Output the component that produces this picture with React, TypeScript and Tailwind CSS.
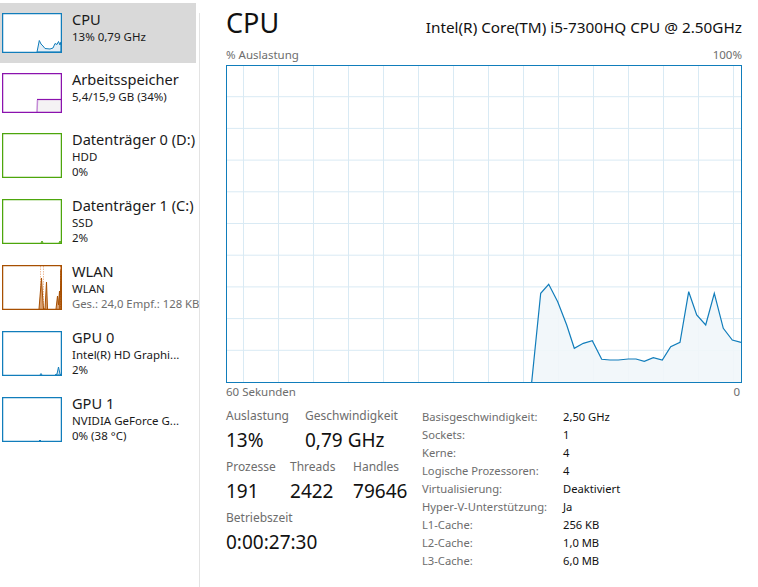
import React from "react";

type Item = {
  title: string;
  lines: string[];
  color: string;
  thumb: React.ReactNode;
  tall?: boolean;
  selected?: boolean;
};

function Thumb({ w = 60, h, color, children }: { w?: number; h: number; color: string; children?: React.ReactNode }) {
  return (
    <svg width={w} height={h} className="block shrink-0">
      <rect x={0} y={0} width={w} height={h} fill="#ffffff" />
      {children}
      <rect x={0.5} y={0.5} width={w - 1} height={h - 1} fill="none" stroke={color} strokeWidth={1.5} />
    </svg>
  );
}

const cpuThumb = (
  <Thumb h={40} color="#117dbb">
    <polygon
      points="35,39 37.3,27.5 39,31 41,33 43,35.5 48,36 51,35 53,30.5 55,31.5 56.5,28.5 58,32 59,29 59,39"
      fill="#e3eef6"
      stroke="#117dbb"
      strokeWidth={1}
    />
  </Thumb>
);

const memThumb = (
  <Thumb h={40} color="#8b12ae">
    <rect x={35} y={26} width={24.5} height={13.5} fill="#f4f2f4" />
    <line x1={35} y1={26.5} x2={60} y2={26.5} stroke="#8b12ae" strokeWidth={1.2} />
    <line x1={35.5} y1={27} x2={35} y2={39} stroke="#c48bd6" strokeWidth={1.5} />
  </Thumb>
);

const disk0Thumb = <Thumb h={45} color="#4da60c" />;

const disk1Thumb = (
  <Thumb h={45} color="#4da60c">
    <polyline points="39,44 40,42 41,44" fill="none" stroke="#4da60c" strokeWidth={1} />
    <polyline points="57,44 58,42 59,44" fill="none" stroke="#4da60c" strokeWidth={1} />
  </Thumb>
);

const wlanThumb = (
  <Thumb h={45} color="#a74f01">
    <line x1={38.5} y1={1} x2={38.5} y2={44} stroke="#eebb99" strokeWidth={1} strokeDasharray="1.5 1" />
    <line x1={41.5} y1={1} x2={41.5} y2={44} stroke="#eebb99" strokeWidth={1} strokeDasharray="1.5 1" />
    <line x1={58.5} y1={1} x2={58.5} y2={44} stroke="#e08a55" strokeWidth={1} strokeDasharray="1.5 1" />
    <polyline points="37,44 39.5,13 40.5,30 41.5,44 43,44 44.5,17 45.5,44" fill="#d9a070" stroke="#a74f01" strokeWidth={1} />
    <polyline points="54,44 55.5,31 56.5,40 57.5,26 58,44" fill="#d9a070" stroke="#a74f01" strokeWidth={1} />
    <polyline points="58,44 59,5 59.5,44" fill="none" stroke="#a74f01" strokeWidth={1} />
  </Thumb>
);

const gpu0Thumb = (
  <Thumb h={45} color="#117dbb">
    <polyline points="38,44 39,42.5 40,44" fill="none" stroke="#117dbb" strokeWidth={1} />
    <polygon points="53,44 55,43 56.5,36 58,43 59,44" fill="#cfe2ef" stroke="#117dbb" strokeWidth={1} />
  </Thumb>
);

const gpu1Thumb = (
  <Thumb h={45} color="#117dbb">
    <polyline points="37,44 38,43 39,44" fill="none" stroke="#117dbb" strokeWidth={1} />
  </Thumb>
);

const items: Item[] = [
  { title: "CPU", lines: ["13% 0,79 GHz"], color: "#117dbb", thumb: cpuThumb, selected: true },
  { title: "Arbeitsspeicher", lines: ["5,4/15,9 GB (34%)"], color: "#8b12ae", thumb: memThumb },
  { title: "Datenträger 0 (D:)", lines: ["HDD", "0%"], color: "#4da60c", thumb: disk0Thumb, tall: true },
  { title: "Datenträger 1 (C:)", lines: ["SSD", "2%"], color: "#4da60c", thumb: disk1Thumb, tall: true },
  { title: "WLAN", lines: ["WLAN", "Ges.: 24,0 Empf.: 128 KB"], color: "#a74f01", thumb: wlanThumb, tall: true },
  { title: "GPU 0", lines: ["Intel(R) HD Graphi...", "2%"], color: "#117dbb", thumb: gpu0Thumb, tall: true },
  { title: "GPU 1", lines: ["NVIDIA GeForce G...", "0% (38 °C)"], color: "#117dbb", thumb: gpu1Thumb, tall: true },
];

function SidebarItem({ item }: { item: Item }) {
  return (
    <div
      className={`flex pl-[2px] pt-[10px] ${item.tall ? "h-[66px]" : "h-[60px]"} ${
        item.selected ? "bg-[#d9d9d9] w-[196px]" : ""
      }`}
    >
      {item.thumb}
      <div className="ml-[10px] -mt-[3px] flex flex-col whitespace-nowrap">
        <div className="text-[14.6px] leading-[19px] text-[#1a1a1a]">{item.title}</div>
        {item.lines.map((l, i) =>
          i === 1 && item.title === "WLAN" ? (
            <div key={i} className="text-[11.3px] leading-[15px] text-[#6d6d6d]">
              {l}
            </div>
          ) : (
            <div key={i} className="text-[11.5px] leading-[15px] text-[#1a1a1a]">
              {l}
            </div>
          )
        )}
      </div>
    </div>
  );
}

const linePts: [number, number][] = [
  [304.7, 316], [313.7, 227.3], [321.7, 218.3], [330.7, 235.7], [339.7, 259], [347.3, 282.3],
  [356.3, 277.3], [365.3, 274.7], [374.7, 293.3], [383, 294], [391.3, 294], [401.3, 293],
  [409, 293], [417.3, 295.3], [426.3, 291.7], [435.3, 294], [443.7, 280.7], [453, 276.3],
  [461.7, 225.7], [469.7, 249], [478.7, 259], [487.3, 227.3], [496.3, 262.3], [505.3, 274],
  [514, 276.3],
];

function CpuGraph() {
  const vx = Array.from({ length: 15 }, (_, i) => 16.5 + i * 35);
  const hy = Array.from({ length: 9 }, (_, i) => 30.7 + i * 31.7);
  const pts = linePts.map((p) => p.join(",")).join(" ");
  return (
    <div className="border border-[#117dbb] w-[516px] h-[318px]">
      <svg width={514} height={316} className="block">
        {vx.map((x) => (
          <line key={x} x1={x} y1={0} x2={x} y2={316} stroke="#d9eaf4" strokeWidth={1} />
        ))}
        {hy.map((y) => (
          <line key={y} x1={0} y1={y} x2={514} y2={y} stroke="#d9eaf4" strokeWidth={1} />
        ))}
        <polygon points={`${pts} 514,316`} fill="#f1f6fa" fillOpacity={0.9} />
        <polyline points={pts} fill="none" stroke="#117dbb" strokeWidth={1.2} />
      </svg>
    </div>
  );
}

const specs: [string, string][] = [
  ["Basisgeschwindigkeit:", "2,50 GHz"],
  ["Sockets:", "1"],
  ["Kerne:", "4"],
  ["Logische Prozessoren:", "4"],
  ["Virtualisierung:", "Deaktiviert"],
  ["Hyper-V-Unterstützung:", "Ja"],
  ["L1-Cache:", "256 KB"],
  ["L2-Cache:", "1,0 MB"],
  ["L3-Cache:", "6,0 MB"],
];

function Stat({ label, value, w }: { label: string; value: string; w: string }) {
  return (
    <div className={w}>
      <div className="text-[12px] leading-[16px] text-[#6d6d6d]">{label}</div>
      <div className="text-[19px] leading-[24px] text-[#111] mt-[4px]">{value}</div>
    </div>
  );
}

export default function App() {
  return (
    <div className="w-[758px] h-[587px] bg-white flex overflow-hidden font-['Noto_Sans',sans-serif]">
      <div className="w-[199px] pt-[3px] flex flex-col">
        {items.map((it) => (
          <SidebarItem key={it.title} item={it} />
        ))}
      </div>
      <div className="w-px bg-[#e3e3e3] mt-[13px]" />
      <div className="flex-1 pl-[26px] pr-[16px] flex flex-col">
        <div className="flex justify-between items-baseline pt-[6px] h-[47px]">
          <div className="text-[27px] leading-[34px] text-[#111]">CPU</div>
          <div className="text-[15.3px] leading-[20px] text-[#111]">Intel(R) Core(TM) i5-7300HQ CPU @ 2.50GHz</div>
        </div>
        <div className="flex justify-between text-[11.5px] leading-[15px] text-[#6d6d6d] h-[18px]">
          <span>% Auslastung</span>
          <span>100%</span>
        </div>
        <CpuGraph />
        <div className="flex justify-between text-[11.5px] leading-[15px] text-[#6d6d6d] mt-[1px] pr-[2px]">
          <span>60 Sekunden</span>
          <span>0</span>
        </div>
        <div className="flex mt-[9px]">
          <div className="w-[196px] flex flex-col gap-[7px]">
            <div className="flex">
              <Stat label="Auslastung" value="13%" w="w-[79px]" />
              <Stat label="Geschwindigkeit" value="0,79 GHz" w="w-[110px]" />
            </div>
            <div className="flex">
              <Stat label="Prozesse" value="191" w="w-[65px]" />
              <Stat label="Threads" value="2422" w="w-[64px]" />
              <Stat label="Handles" value="79646" w="w-[70px]" />
            </div>
            <div className="flex">
              <Stat label="Betriebszeit" value="0:00:27:30" w="w-[120px]" />
            </div>
          </div>
          <div className="flex flex-col">
            {specs.map(([k, v]) => (
              <div key={k} className="flex h-[18px] text-[11.2px] leading-[18px]">
                <span className="w-[141px] text-[#6d6d6d]">{k}</span>
                <span className="text-[#111]">{v}</span>
              </div>
            ))}
          </div>
        </div>
      </div>
    </div>
  );
}
